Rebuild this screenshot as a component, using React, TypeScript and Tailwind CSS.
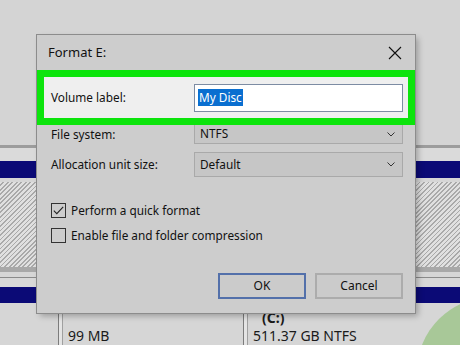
import React from 'react';

const font = { fontFamily: '"Noto Sans", "Open Sans", sans-serif' };

function Chevron() {
  return (
    <svg width="8" height="5" viewBox="0 0 8 5" fill="none" stroke="#333" strokeWidth="1">
      <path d="M0.5 0.5 L4 4 L7.5 0.5" />
    </svg>
  );
}

function Checkbox({ checked }: { checked?: boolean }) {
  return (
    <div className="w-[15px] h-[15px] border border-[#333] flex items-center justify-center shrink-0">
      {checked && (
        <svg width="11" height="9" viewBox="0 0 11 9" fill="none" stroke="#222" strokeWidth="1.1">
          <path d="M0.8 4.6 L3.8 7.6 L10.2 0.8" />
        </svg>
      )}
    </div>
  );
}

function Dropdown({ value, className }: { value: string; className: string }) {
  return (
    <div
      className={`w-[209px] flex items-center justify-between pl-[5px] pr-[7px] bg-[#c6c6c6] border-[#a9a9a9] text-[#111] ${className}`}
    >
      <span>{value}</span>
      <Chevron />
    </div>
  );
}

export default function App() {
  return (
    <div className="relative w-[460px] h-[345px] overflow-hidden bg-[#d5d5d5] flex flex-col text-[11.8px] text-[#111]" style={font}>
      {/* disk management behind the dialog */}
      <div className="h-[145px] shrink-0 bg-[#d4d4d4]" />
      <div className="h-[3px] shrink-0 bg-[#9c9c9c]" />
      <div className="h-[13px] shrink-0 bg-[#dadada]" />
      <div className="h-[17px] shrink-0 bg-[#0b0a76]" />
      <div className="h-[4px] shrink-0 bg-[#d6d6d6]" />
      <div className="h-[85px] shrink-0 bg-[repeating-linear-gradient(135deg,#e0e0e0_0px,#e0e0e0_2px,#a9a9a9_2px,#a9a9a9_3.2px)]" />
      <div className="h-[5px] shrink-0 bg-[#a8a8a8]" />
      <div className="h-[5px] shrink-0 bg-[#d6d6d6]" />
      <div className="h-px shrink-0 bg-[#8a8a8a]" />
      <div className="h-[9px] shrink-0 bg-[#d8d8d8]" />
      <div className="h-[16px] shrink-0 bg-[#0b0a76]" />
      <div className="relative flex-1 flex bg-[#d6d6d6] overflow-hidden text-[14px] text-[#1a1a1a] leading-[18px]">
        <div className="w-[58px] shrink-0" />
        <div className="w-[5px] shrink-0 border-x border-l-[#7c7c7c] border-r-[#a0a0a0] bg-[#e4e4e4]" />
        <div className="w-[180px] shrink-0 pl-[5px] pt-[24px]">99 MB</div>
        <div className="w-[5px] shrink-0 border-x border-l-[#7c7c7c] border-r-[#a0a0a0] bg-[#e4e4e4]" />
        <div className="flex-1 pl-[5px] pt-[6px]">
          <div className="pl-[9px] font-bold">(C:)</div>
          <div>511.37 GB NTFS</div>
        </div>
        <div className="absolute left-[417px] top-[-6px] w-[150px] h-[150px] rounded-full bg-[#a8c898]" />
      </div>

      {/* Format dialog */}
      <div className="absolute left-[37px] top-[35px] w-[378px] h-[278px] bg-[#cdcdcd] shadow-[0_0_0_1px_#8c8c8c,3px_3px_6px_rgba(0,0,0,0.28)] flex flex-col">
        <div className="h-[35px] shrink-0 flex items-center justify-between pl-[11px] pr-[13px]">
          <span className="text-[13px]">Format E:</span>
          <svg width="14" height="14" viewBox="0 0 14 14" stroke="#111" strokeWidth="1.1">
            <path d="M1 1 L13 13 M13 1 L1 13" />
          </svg>
        </div>

        <div className="h-[55px] shrink-0 border-[7px] border-[#0ce40c] bg-[#efefef] flex items-center pl-[7px]">
          <span className="w-[143px] shrink-0">Volume label:</span>
          <div className="w-[209px] h-[28px] border border-[#7d8ca3] bg-white flex items-center px-[3px]">
            <span className="bg-[#0a6fd0] text-white px-px leading-[17px]">My Disc</span>
          </div>
        </div>

        <div className="flex items-center pl-[14px]">
          <span className="w-[143px] shrink-0">File system:</span>
          <Dropdown value="NTFS" className="h-[19px] border-x border-b" />
        </div>

        <div className="flex items-center pl-[14px] mt-[8px]">
          <span className="w-[143px] shrink-0">Allocation unit size:</span>
          <Dropdown value="Default" className="h-[25px] border" />
        </div>

        <div className="flex items-center gap-[5px] pl-[14px] mt-[26px] h-[15px]">
          <Checkbox checked />
          <span>Perform a quick format</span>
        </div>

        <div className="flex items-center gap-[5px] pl-[14px] mt-[10px] h-[15px]">
          <Checkbox />
          <span>Enable file and folder compression</span>
        </div>

        <div className="flex justify-end gap-[9px] pr-[12px] mt-[30px]">
          <button className="w-[88px] h-[26px] border-2 border-[#5370aa] bg-[#cbcbcb] text-[12px]">OK</button>
          <button className="w-[88px] h-[26px] border-2 border-[#acacac] bg-[#cbcbcb] text-[12px]">Cancel</button>
        </div>
      </div>
    </div>
  );
}
